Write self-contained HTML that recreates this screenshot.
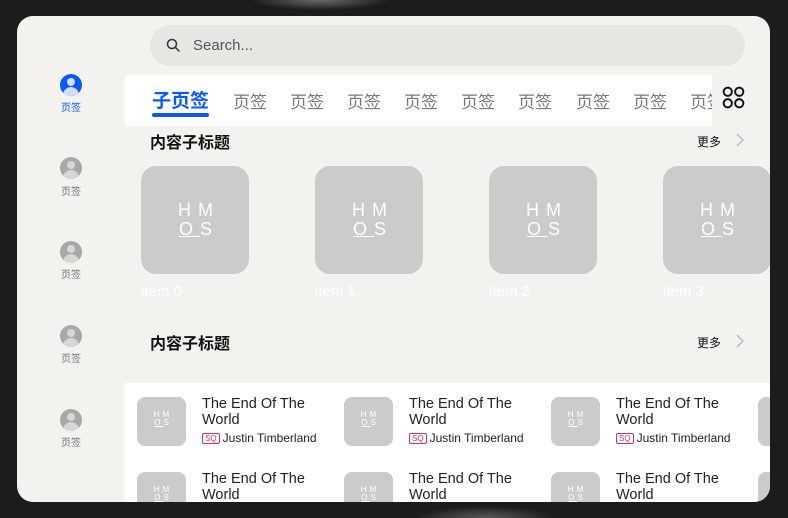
<!DOCTYPE html>
<html><head><meta charset="utf-8">
<style>
*{margin:0;padding:0;box-sizing:border-box}
body{width:788px;height:518px;overflow:hidden;background:#1c1c1c;font-family:"Liberation Sans","Noto Sans CJK SC",sans-serif;position:relative}
.glow1{position:absolute;left:220px;top:0;width:200px;height:14px;background:radial-gradient(ellipse 70px 10px at 50% 0,#6a6a6a,#1c1c1c 100%)}
.glow2{position:absolute;left:385px;top:504px;width:200px;height:14px;background:radial-gradient(ellipse 70px 12px at 50% 100%,#5a5a5a,#1c1c1c 100%)}
.screen{position:absolute;left:17px;top:16px;width:753px;height:486px;background:#f3f2ef;border-radius:16px;overflow:hidden}
.abs{position:absolute;white-space:nowrap}
.search{left:133px;top:9px;width:595px;height:41px;background:#e7e6e3;border-radius:21px}
.search span{position:absolute;left:43px;top:12px;font-size:15px;color:#555}
.tabs{left:108px;top:59px;width:587px;height:51px;background:#fff;overflow:hidden}
.tab{position:absolute;top:13px;font-size:17px;color:#777;white-space:nowrap}
.act{left:27px;top:11px;font-size:19px;font-weight:bold;color:#0a59f7}
.ul{left:27px;top:38px;width:57px;height:4px;background:#0a59f7;border-radius:2px}
.title{font-size:16px;font-weight:bold;color:#111}
.more{font-size:12px;color:#111}
.card{width:108px;height:108px;background:#cbcbcb;border-radius:15px}
.logo{position:absolute;color:#fff;text-align:center;line-height:1.05}
.lbl{font-size:15px;color:#fff}
.list{left:108px;top:367px;width:645px;height:130px;background:#fff}
.th{width:49px;height:49px;background:#cbcbcb;border-radius:8px}
.st{font-size:14.5px;color:#222;line-height:16px}
.ar{font-size:12px;color:#222}
.sq{display:inline-block;border:1px solid #d0306a;color:#d0306a;font-size:8px;line-height:9px;padding:0 2px;border-radius:2px;vertical-align:1px;margin-right:3px}
.nav{position:absolute;left:43px;width:22px;height:22px;border-radius:50%;background:#a8a8a8;overflow:hidden}
.nav.on{background:#0a59f7}
.nav i{position:absolute;left:7px;top:4px;width:8px;height:8px;border-radius:50%;background:#d6d6d6}
.nav b{position:absolute;left:3px;top:13px;width:16px;height:12px;border-radius:8px 8px 0 0;background:#d6d6d6}
.nav.on i,.nav.on b{background:#cfe0ff}
.nl{position:absolute;left:38px;width:32px;text-align:center;font-size:10px;color:#777}
.big{left:36px;top:35px;font-size:18px;letter-spacing:7px;width:44px}
.sm{left:15px;top:14px;font-size:8px;letter-spacing:3px;width:22px}
</style></head><body>
<div class="glow1"></div><div class="glow2"></div>
<div class="screen">
 <div class="abs search">
  <svg class="abs" style="left:16px;top:13px" width="15" height="15" viewBox="0 0 15 15"><circle cx="6" cy="6" r="4.5" fill="none" stroke="#333" stroke-width="1.5"/><path d="M9.3 9.3 L13 13" stroke="#333" stroke-width="1.5" stroke-linecap="round"/></svg>
  <span>Search...</span>
 </div>
 <div class="nav on" style="top:58px"><i></i><b></b></div><div class="nl" style="top:83px;color:#0a59f7">页签</div>
 <div class="nav" style="top:141px"><i></i><b></b></div><div class="nl" style="top:167px">页签</div>
 <div class="nav" style="top:225px"><i></i><b></b></div><div class="nl" style="top:250px">页签</div>
 <div class="nav" style="top:309px"><i></i><b></b></div><div class="nl" style="top:334px">页签</div>
 <div class="nav" style="top:393px"><i></i><b></b></div><div class="nl" style="top:418px">页签</div>
 <div class="abs tabs">
  <div class="abs act">子页签</div><div class="abs ul"></div>
  <div class="tab" style="left:108px">页签</div>
  <div class="tab" style="left:165px">页签</div>
  <div class="tab" style="left:222px">页签</div>
  <div class="tab" style="left:279px">页签</div>
  <div class="tab" style="left:336px">页签</div>
  <div class="tab" style="left:393px">页签</div>
  <div class="tab" style="left:451px">页签</div>
  <div class="tab" style="left:508px">页签</div>
  <div class="tab" style="left:565px">页签</div>
 </div>
 <svg class="abs" style="left:705px;top:70px" width="23" height="23" viewBox="0 0 24 24" fill="none" stroke="#111" stroke-width="2"><circle cx="6" cy="6" r="4.3"/><circle cx="18" cy="6" r="4.3"/><circle cx="6" cy="18" r="4.3"/><circle cx="18" cy="18" r="4.3"/></svg>
 <div class="abs title" style="left:133px;top:113px">内容子标题</div>
 <div class="abs more" style="left:680px;top:117px">更多</div>
 <svg class="abs" style="left:719px;top:117px" width="8" height="14" viewBox="0 0 8 14"><path d="M1 1 L7 7 L1 13" fill="none" stroke="#bbb" stroke-width="1.5"/></svg>
 <div class="abs card" style="left:124px;top:150px"><div class="logo big">HM<br><u>O</u>S</div></div>
 <div class="abs card" style="left:298px;top:150px"><div class="logo big">HM<br><u>O</u>S</div></div>
 <div class="abs card" style="left:472px;top:150px"><div class="logo big">HM<br><u>O</u>S</div></div>
 <div class="abs card" style="left:646px;top:150px"><div class="logo big">HM<br><u>O</u>S</div></div>
 <div class="abs lbl" style="left:124px;top:267px">item 0</div>
 <div class="abs lbl" style="left:298px;top:267px">item 1</div>
 <div class="abs lbl" style="left:472px;top:267px">item 2</div>
 <div class="abs lbl" style="left:646px;top:267px">item 3</div>
 <div class="abs title" style="left:133px;top:314px">内容子标题</div>
 <div class="abs more" style="left:680px;top:318px">更多</div>
 <svg class="abs" style="left:719px;top:318px" width="8" height="14" viewBox="0 0 8 14"><path d="M1 1 L7 7 L1 13" fill="none" stroke="#bbb" stroke-width="1.5"/></svg>
 <div class="abs list">
  <div class="abs th" style="left:12px;top:14px"><div class="logo sm">HM<br><u>O</u>S</div></div>
  <div class="abs st" style="left:77px;top:13px">The End Of The<br>World</div>
  <div class="abs ar" style="left:77px;top:48px"><span class="sq">SQ</span>Justin Timberland</div>
  <div class="abs th" style="left:219px;top:14px"><div class="logo sm">HM<br><u>O</u>S</div></div>
  <div class="abs st" style="left:284px;top:13px">The End Of The<br>World</div>
  <div class="abs ar" style="left:284px;top:48px"><span class="sq">SQ</span>Justin Timberland</div>
  <div class="abs th" style="left:426px;top:14px"><div class="logo sm">HM<br><u>O</u>S</div></div>
  <div class="abs st" style="left:491px;top:13px">The End Of The<br>World</div>
  <div class="abs ar" style="left:491px;top:48px"><span class="sq">SQ</span>Justin Timberland</div>
  <div class="abs th" style="left:633px;top:14px"></div>
  <div class="abs th" style="left:12px;top:89px"><div class="logo sm">HM<br><u>O</u>S</div></div>
  <div class="abs st" style="left:77px;top:88px">The End Of The<br>World</div>
  <div class="abs th" style="left:219px;top:89px"><div class="logo sm">HM<br><u>O</u>S</div></div>
  <div class="abs st" style="left:284px;top:88px">The End Of The<br>World</div>
  <div class="abs th" style="left:426px;top:89px"><div class="logo sm">HM<br><u>O</u>S</div></div>
  <div class="abs st" style="left:491px;top:88px">The End Of The<br>World</div>
  <div class="abs th" style="left:633px;top:89px"></div>
 </div>
</div>
</body></html>
